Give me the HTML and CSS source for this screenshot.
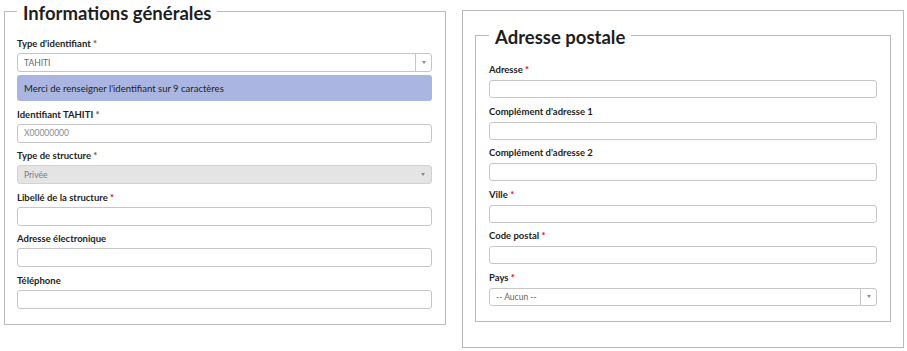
FILE: index.html
```html
<!DOCTYPE html>
<html lang="fr">
<head>
<meta charset="utf-8">
<title>Formulaire structure</title>
<link rel="stylesheet" href="styles.css">
</head>
<body>
<div class="page">
  <fieldset class="group group-left">
    <legend class="group-title">Informations générales</legend>

    <div class="field">
      <label class="label">Type d'identifiant <span class="req req-muted">*</span></label>
      <div class="select">
        <span class="select-value">TAHITI</span>
        <span class="select-arrow"><span class="caret"></span></span>
      </div>
      <div class="info">Merci de renseigner l'identifiant sur 9 caractères</div>
    </div>

    <div class="field">
      <label class="label">Identifiant TAHITI <span class="req req-muted">*</span></label>
      <input class="input" type="text" placeholder="X00000000">
    </div>

    <div class="field">
      <label class="label">Type de structure <span class="req req-muted">*</span></label>
      <div class="select select-disabled">
        <span class="select-value">Privée</span>
        <span class="select-arrow select-arrow-plain"><span class="caret"></span></span>
      </div>
    </div>

    <div class="field">
      <label class="label">Libellé de la structure <span class="req">*</span></label>
      <input class="input" type="text">
    </div>

    <div class="field">
      <label class="label">Adresse électronique</label>
      <input class="input" type="text">
    </div>

    <div class="field">
      <label class="label">Téléphone</label>
      <input class="input" type="text">
    </div>
  </fieldset>

  <div class="panel">
    <fieldset class="group group-right">
      <legend class="group-title">Adresse postale</legend>

      <div class="field">
        <label class="label">Adresse <span class="req">*</span></label>
        <input class="input" type="text">
      </div>

      <div class="field">
        <label class="label">Complément d'adresse 1</label>
        <input class="input" type="text">
      </div>

      <div class="field">
        <label class="label">Complément d'adresse 2</label>
        <input class="input" type="text">
      </div>

      <div class="field">
        <label class="label">Ville <span class="req">*</span></label>
        <input class="input" type="text">
      </div>

      <div class="field">
        <label class="label">Code postal <span class="req">*</span></label>
        <input class="input" type="text">
      </div>

      <div class="field">
        <label class="label">Pays <span class="req">*</span></label>
        <div class="select">
          <span class="select-value">-- Aucun --</span>
          <span class="select-arrow"><span class="caret"></span></span>
        </div>
      </div>
    </fieldset>
  </div>
</div>
</body>
</html>
```

FILE: styles.css
```css
* {
  box-sizing: border-box;
}

html, body {
  margin: 0;
  padding: 0;
  background: #ffffff;
}

body {
  font-family: Lato, "Open Sans", "Liberation Sans", sans-serif;
  color: #1e1e1e;
}

.page {
  display: grid;
  grid-template-columns: 442px 442px;
  column-gap: 16px;
  align-items: start;
  padding: 0 0 0 4px;
}

.group {
  margin: 0;
  min-width: 0;
  border: 1px solid #b9b9b9;
}

.group-left {
  padding: 15px 13px 15.5px 12px;
}

.panel {
  margin-top: 10px;
  border: 1px solid #b9b9b9;
  padding: 13px 12px 25px 12px;
}

.group-right {
  padding: 17px 13px 15px 13px;
}

.group-title {
  padding: 3px 6px 0 6px;
  font-size: 18.5px;
  line-height: 20px;
  font-weight: 700;
  color: #1e1e1e;
}

.field {
  display: flex;
  flex-direction: column;
  margin-bottom: 7.5px;
}

.field:last-child {
  margin-bottom: 0;
}

.label {
  display: block;
  font-size: 9.5px;
  line-height: 12px;
  font-weight: 700;
  color: #1e1e1e;
  margin-bottom: 3px;
}

.group-right .label {
  margin-bottom: 4px;
}

.req {
  color: #e1000f;
}

.req.req-muted {
  color: #5a5a5a;
}

.input {
  display: block;
  width: 100%;
  height: 19px;
  margin: 0;
  padding: 0 6px;
  border: 1px solid #c6c6c6;
  border-radius: 3px;
  background: #ffffff;
  font-family: Lato, "Open Sans", "Liberation Sans", sans-serif;
  font-size: 8.5px;
  color: #555;
  outline: none;
}

.group-right .input {
  height: 18px;
}

.input::placeholder {
  color: #8a8a8a;
}

.select {
  display: flex;
  align-items: stretch;
  height: 19px;
  border: 1px solid #c6c6c6;
  border-radius: 3px;
  background: #ffffff;
}

.group-right .select {
  height: 18px;
}

.select-value {
  flex: 1;
  display: flex;
  align-items: center;
  padding-left: 6px;
  font-size: 8.5px;
  color: #666;
}

.select-arrow {
  width: 16px;
  display: flex;
  align-items: center;
  justify-content: center;
  border-left: 1px solid #c6c6c6;
}

.select-arrow-plain {
  border-left: none;
}

.caret {
  width: 0;
  height: 0;
  border-left: 2px solid transparent;
  border-right: 2px solid transparent;
  border-top: 3px solid #8a8a8a;
}

.select-disabled {
  background: #e4e4e5;
  border-color: #d2d2d2;
}

.select-disabled .select-value {
  color: #7a7a7a;
}

.info {
  margin-top: 3px;
  height: 26px;
  display: flex;
  align-items: center;
  padding-left: 7px;
  border-radius: 3px;
  background: #aab6e1;
  font-size: 9.5px;
  color: #222;
}
```
